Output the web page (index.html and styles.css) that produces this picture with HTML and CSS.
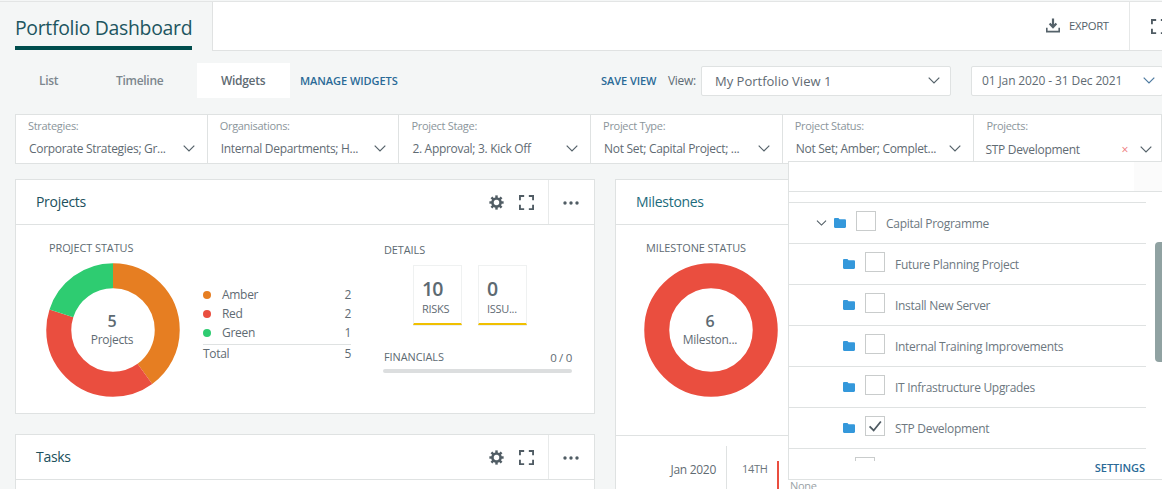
FILE: index.html
```html
<!DOCTYPE html>
<html lang="en">
<head>
<meta charset="utf-8">
<title>Portfolio Dashboard</title>
<link rel="stylesheet" href="styles.css">
</head>
<body>
<svg class="defs" aria-hidden="true">
  <symbol id="chev" viewBox="0 0 12 7"><polyline points="0.7,0.7 6,6 11.3,0.7" fill="none" stroke="currentColor" stroke-width="1.2"/></symbol>
  <symbol id="gear" viewBox="0 0 16 16">
    <circle cx="8" cy="8" r="4.4" fill="none" stroke="currentColor" stroke-width="2.6"/>
    <g stroke="currentColor" stroke-width="2.6">
      <line x1="8" y1="0.4" x2="8" y2="15.6"/>
      <line x1="0.4" y1="8" x2="15.6" y2="8"/>
      <line x1="2.6" y1="2.6" x2="13.4" y2="13.4"/>
      <line x1="13.4" y1="2.6" x2="2.6" y2="13.4"/>
    </g>
    <circle cx="8" cy="8" r="2.9" fill="#fff"/>
  </symbol>
  <symbol id="expand" viewBox="0 0 16 16"><path d="M1 5.5V1H5.5M10.5 1H15V5.5M15 10.5V15H10.5M5.5 15H1V10.5" fill="none" stroke="currentColor" stroke-width="2"/></symbol>
  <symbol id="dots" viewBox="0 0 16 4"><circle cx="2" cy="2" r="1.7" fill="currentColor"/><circle cx="8" cy="2" r="1.7" fill="currentColor"/><circle cx="14" cy="2" r="1.7" fill="currentColor"/></symbol>
  <symbol id="folder" viewBox="0 0 12 10"><path d="M0 1.2C0 .5.5 0 1.2 0H4.4L5.6 1.3H10.8C11.5 1.3 12 1.8 12 2.5V8.8C12 9.5 11.5 10 10.8 10H1.2C.5 10 0 9.5 0 8.8Z" fill="currentColor"/></symbol>
</svg>

<div class="app">
  <header class="topbar">
    <div class="title-tab"><h1 class="title">Portfolio Dashboard</h1></div>
    <div class="top-white">
      <button class="export">
        <svg class="export-icon" viewBox="0 0 14 14"><path d="M7 0V8M3.6 5L7 8.6L10.4 5" fill="none" stroke="currentColor" stroke-width="2.2"/><path d="M.8 9.3V13.1H13.2V9.3" fill="none" stroke="currentColor" stroke-width="1.6"/></svg>
        <span>EXPORT</span>
      </button>
      <div class="full-btn"><svg class="ico-expand"><use href="#expand"/></svg></div>
    </div>
  </header>

  <nav class="tabs-row">
    <div class="tab tab-list">List</div>
    <div class="tab tab-timeline">Timeline</div>
    <div class="tab tab-active">Widgets</div>
    <a class="link manage">MANAGE WIDGETS</a>
    <a class="link save">SAVE VIEW</a>
    <span class="view-label">View:</span>
    <div class="select view-select"><span>My Portfolio View 1</span><svg class="chev"><use href="#chev"/></svg></div>
    <div class="select date-select"><span>01 Jan 2020 - 31 Dec 2021</span><svg class="chev chev-blue"><use href="#chev"/></svg></div>
  </nav>

  <section class="filters">
    <div class="filter"><label>Strategies:</label><div class="filter-val"><span>Corporate Strategies; Gr...</span><svg class="chev"><use href="#chev"/></svg></div></div>
    <div class="filter"><label>Organisations:</label><div class="filter-val"><span>Internal Departments; H...</span><svg class="chev"><use href="#chev"/></svg></div></div>
    <div class="filter"><label>Project Stage:</label><div class="filter-val"><span>2. Approval; 3. Kick Off</span><svg class="chev"><use href="#chev"/></svg></div></div>
    <div class="filter"><label>Project Type:</label><div class="filter-val"><span>Not Set; Capital Project; ...</span><svg class="chev"><use href="#chev"/></svg></div></div>
    <div class="filter"><label>Project Status:</label><div class="filter-val"><span>Not Set; Amber; Complet...</span><svg class="chev"><use href="#chev"/></svg></div></div>
    <div class="filter filter-last"><label>Projects:</label><div class="filter-val val-low"><span>STP Development</span><i class="clear">×</i><svg class="chev"><use href="#chev"/></svg></div></div>
  </section>

  <main class="board">
    <div class="col-left">
      <article class="card card-projects">
        <div class="card-head">
          <h2>Projects</h2>
          <div class="tools">
            <svg class="ico-gear"><use href="#gear"/></svg>
            <svg class="ico-expand"><use href="#expand"/></svg>
          </div>
          <div class="more"><svg class="ico-dots"><use href="#dots"/></svg></div>
        </div>
        <div class="projects-body">
          <div class="status">
            <h3 class="sec">PROJECT STATUS</h3>
            <div class="donut">
              <svg viewBox="0 0 134 134">
                <g fill="none" stroke-width="25" transform="rotate(-90 67 67)">
                  <circle cx="67" cy="67" r="54.25" pathLength="100" stroke="#e67e22" stroke-dasharray="40 60"/>
                  <circle cx="67" cy="67" r="54.25" pathLength="100" stroke="#ea4e3f" stroke-dasharray="40 60" stroke-dashoffset="-40"/>
                  <circle cx="67" cy="67" r="54.25" pathLength="100" stroke="#2ecc71" stroke-dasharray="20 80" stroke-dashoffset="-80"/>
                </g>
              </svg>
              <div class="donut-text"><b>5</b><span>Projects</span></div>
            </div>
          </div>
          <div class="legend">
            <div class="lg-row"><i class="dot amber"></i><span>Amber</span><em>2</em></div>
            <div class="lg-row"><i class="dot red"></i><span>Red</span><em>2</em></div>
            <div class="lg-row"><i class="dot green"></i><span>Green</span><em>1</em></div>
            <div class="lg-total"><span>Total</span><em>5</em></div>
          </div>
          <div class="details">
            <h3 class="sec">DETAILS</h3>
            <div class="tiles">
              <div class="tile"><b>10</b><span>RISKS</span></div>
              <div class="tile"><b>0</b><span>ISSU...</span></div>
            </div>
            <div class="fin-head"><h3 class="sec">FINANCIALS</h3><span>0 / 0</span></div>
            <div class="fin-bar"></div>
          </div>
        </div>
      </article>
      <article class="card card-tasks">
        <div class="card-head">
          <h2>Tasks</h2>
          <div class="tools">
            <svg class="ico-gear"><use href="#gear"/></svg>
            <svg class="ico-expand"><use href="#expand"/></svg>
          </div>
          <div class="more"><svg class="ico-dots"><use href="#dots"/></svg></div>
        </div>
      </article>
    </div>
    <article class="card card-miles">
      <div class="card-head"><h2 class="miles-title">Milestones</h2></div>
      <div class="miles-body">
        <h3 class="sec">MILESTONE STATUS</h3>
        <div class="donut">
          <svg viewBox="0 0 134 134"><circle cx="67" cy="67" r="54.25" fill="none" stroke="#ea4e3f" stroke-width="25"/></svg>
          <div class="donut-text"><b>6</b><span>Mileston...</span></div>
        </div>
      </div>
      <div class="timeline">
        <div class="tl-month">Jan 2020</div>
        <div class="tl-day"><span>14TH</span><i class="tl-bar"></i></div>
      </div>
    </article>
  </main>

  <div class="dropdown">
    <div class="dd-search"><div class="dd-search-end"></div></div>
    <div class="dd-list">
      <div class="dd-gap"></div>
      <div class="dd-row">
        <svg class="dd-chev"><use href="#chev"/></svg>
        <svg class="folder"><use href="#folder"/></svg>
        <i class="check"></i><span>Capital Programme</span>
      </div>
      <div class="dd-row child"><svg class="folder"><use href="#folder"/></svg><i class="check"></i><span>Future Planning Project</span></div>
      <div class="dd-row child"><svg class="folder"><use href="#folder"/></svg><i class="check"></i><span>Install New Server</span></div>
      <div class="dd-row child"><svg class="folder"><use href="#folder"/></svg><i class="check"></i><span>Internal Training Improvements</span></div>
      <div class="dd-row child"><svg class="folder"><use href="#folder"/></svg><i class="check"></i><span>IT Infrastructure Upgrades</span></div>
      <div class="dd-row child"><svg class="folder"><use href="#folder"/></svg><i class="check checked"><svg viewBox="0 0 20 20"><polyline points="4,10.5 8.5,15 16.5,5" fill="none" stroke="#4e5a62" stroke-width="2"/></svg></i><span>STP Development</span></div>
      <div class="dd-row partial"><i class="check"></i></div>
    </div>
    <div class="dd-scroll"></div>
    <a class="link settings">SETTINGS</a>
  </div>
  <div class="none-text">None</div>
</div>
</body>
</html>
```
FILE: styles.css
```css
* { box-sizing: border-box; }
html, body { margin: 0; padding: 0; }
body {
  width: 1162px; height: 489px; overflow: hidden;
  background: #f4f6f6;
  font-family: "Open Sans", "Noto Sans", sans-serif;
  font-size: 12px; color: #5f6b73;
  letter-spacing: -0.025em;
}
.defs { display: none; }
svg { display: block; }
h1, h2, h3 { margin: 0; font-weight: 400; }
i, em { font-style: normal; }

.app { position: relative; width: 1162px; height: 489px; overflow: hidden; }

/* top bar */
.topbar { display: flex; height: 50px; margin-top: 1px; border-top: 1px solid #e3e5e5; }
.title-tab { width: 213px; padding-left: 15px; border-right: 1px solid #e0e2e2; }
.title {
  width: 177px; height: 48px; padding-top: 12px;
  border-bottom: 4px solid #004d4d;
  font-size: 19.4px; line-height: 27px; color: #1d5560; white-space: nowrap;
}
.top-white { flex: 1; display: flex; justify-content: flex-end; background: #fff; border-bottom: 1px solid #e0e2e2; }
.export {
  display: flex; flex: none; align-items: center; gap: 9px; width: 85px; padding: 0 0 2px 1px;
  background: none; border: 0; border-right: 1px solid #e6e8e8;
  font: inherit; font-size: 11.3px; color: #55626a; letter-spacing: inherit;
}
.export-icon { width: 14px; height: 15px; color: #55626a; flex: none; }
.full-btn { flex: none; width: 32px; padding: 17px 0 0 21px; overflow: hidden; }
.ico-expand { width: 15px; height: 15px; flex: none; color: #505c64; }

/* tab row */
.tabs-row { display: flex; align-items: center; height: 35px; margin-top: 12px; }
.tabs-row > * { flex: none; }
.tab { height: 35px; padding-top: 1px; line-height: 34px; font-weight: 600; color: #7c878e; }
.tab-list { margin-left: 39px; width: 76px; }
.tab-timeline { width: 82px; padding-left: 1px; }
.tab-active { width: 93px; padding-left: 24px; background: #fff; color: #5f6b73; }
.link { font-weight: 600; font-size: 11px; color: #2a6a97; white-space: nowrap; letter-spacing: -0.005em; }
.manage { margin-left: 10px; width: 301px; }
.view-label { margin-left: 12px; width: 33px; color: #5f6b73; }
.select {
  display: flex; align-items: center; height: 30px; background: #fff;
  border: 1px solid #dfe2e2; border-radius: 2px; color: #5f6b73;
}
.save { width: 55px; }
.view-select { width: 250px; padding: 0 10px 0 13px; font-size: 13px; letter-spacing: 0; }
.view-select span { padding-top: 1px; }
.date-select { width: 192px; margin-left: 20px; padding: 0 7px 0 10px; letter-spacing: -0.01em; }
.select span { flex: 1; white-space: nowrap; }
.chev { width: 12px; height: 7px; flex: none; color: #55626a; }
.chev-blue { color: #4d7aa0; }

/* filters */
.filters { display: flex; height: 50px; margin: 16px 0 0 15px; background: #fff; border: 1px solid #dfe2e2; }
.filter { flex: 0 0 191.7px; padding: 4px 12px 0 13px; border-right: 1px solid #dfe2e2; }
.filter label { display: block; margin-left: -1px; font-size: 11px; line-height: 14px; color: #8b959b; }
.filter-val { display: flex; align-items: center; margin-top: 6px; height: 18px; color: #5f6b73; white-space: nowrap; }
.filter-val span { flex: 1; }
.val-low { margin: 7px 0 0 -2px; }
.filter-last { border-right: 0; flex: 1; padding-right: 9px; }
.clear { color: #e77; font-size: 12px; margin-right: 12px; }

/* board */
.board { display: grid; grid-template-columns: 580px 1fr; column-gap: 20px; margin: 15px 0 0 15px; }
.col-left { display: flex; flex-direction: column; gap: 20px; }
.card { background: #fff; border: 1px solid #dfe2e2; }
.card-head { display: flex; align-items: center; height: 45px; padding-left: 20px; border-bottom: 1px solid #dfe2e2; }
.card-head h2 { flex: 1; padding-bottom: 2px; font-size: 14px; color: #20505c; }
.card-head .miles-title { color: #1c6b7c; }
.tools { display: flex; align-items: center; gap: 15px; }
.ico-gear { width: 15px; height: 15px; color: #505c64; }
.more { display: flex; align-items: center; justify-content: center; width: 46px; height: 100%; margin-left: 14px; padding-right: 2px; border-left: 1px solid #e8eaea; }
.ico-dots { width: 16px; height: 4px; color: #505c64; margin-top: 2px; }

.card-projects { height: 235px; }
.projects-body { display: flex; height: 188px; }
.status { width: 187px; padding: 16px 0 0 33px; }
.sec { font-size: 10.9px; font-weight: 500; line-height: 14px; color: #5d6a72; letter-spacing: -0.005em; white-space: nowrap; }
.donut { position: relative; width: 134px; height: 134px; margin: 8px 0 0 -3px; }
.donut-text { position: absolute; inset: 0; display: flex; flex-direction: column; align-items: center; justify-content: center; padding: 0 2px 0 0; }
.donut-text b { font-size: 16px; line-height: 19px; font-weight: 600; color: #5d6a72; }
.donut-text span { font-size: 12px; line-height: 17px; }

.legend { width: 148px; padding-top: 60px; }
.lg-row { display: flex; align-items: center; height: 19px; }
.lg-row span { flex: 1; margin-left: 11px; }
.dot { width: 8px; height: 8px; border-radius: 50%; margin-left: 0; }
.amber { background: #e67e22; }
.red { background: #ea4e3f; }
.green { background: #2ecc71; }
.lg-total { display: flex; justify-content: space-between; height: 20px; margin-top: 2px; border-top: 1px solid #dfe2e2; line-height: 18px; }

.details { width: 189px; margin-left: 32px; padding-top: 18px; }
.details > .sec, .fin-head { padding-left: 1px; }
.tiles { display: flex; gap: 16px; margin: 8px 0 0 30px; }
.tile { display: flex; flex-direction: column; width: 49px; height: 60px; padding: 10px 0 0 8px; border: 1px solid #eff1f1; border-bottom: 2px solid #f0c000; box-shadow: 0 1px 0 #eef0f0; }
.tile b { font-size: 19.5px; line-height: 26px; font-weight: 600; color: #5d6a72; letter-spacing: -0.05em; }
.tile span { font-size: 11px; line-height: 16px; margin-top: -1px; white-space: nowrap; }
.fin-head { display: flex; justify-content: space-between; align-items: center; height: 14px; margin-top: 25px; }
.fin-head span { font-size: 11.5px; }
.fin-bar { height: 4px; margin-top: 5px; background: #dcdedf; border-radius: 2px; }

.card-tasks { height: 60px; }
.card-miles { position: relative; height: 320px; margin-right: -5px; }
.miles-body { height: 211px; padding: 16px 0 0 30px; border-bottom: 1px solid #dfe2e2; }
.miles-body .donut { margin-left: -2px; }
.timeline { display: flex; height: 60px; padding-top: 10px; }
.tl-month { width: 111px; padding: 15px 10px 0 0; text-align: right; color: #5f6b73; border-right: 1px solid #dfe2e2; }
.tl-day { flex: 1; display: flex; padding: 15px 0 0 15px; color: #6b767d; font-size: 11px; }
.tl-bar { width: 2px; height: 40px; margin-left: 9px; background: #ea4e3f; }

/* dropdown overlay */
.dropdown { position: absolute; left: 788px; top: 161px; width: 375px; height: 319px; background: #fff; border: 1px solid #dfe2e2; z-index: 2; }
.dd-search { position: relative; height: 30px; border-bottom: 1px solid #dfe2e2; }
.dd-search-end { position: absolute; right: 0; top: 0; bottom: 0; width: 28px; background: #fbfbfb; }
.dd-list { width: 357px; }
.dd-gap { height: 11px; border-bottom: 1px solid #dfe2e2; }
.dd-row { display: flex; align-items: center; height: 41px; padding-left: 27px; border-bottom: 1px solid #dfe2e2; color: #6d787f; font-size: 12px; }
.dd-row span { margin-top: 1px; }
.dd-row.child { padding-left: 54px; }
.dd-chev { width: 11px; height: 6px; margin-right: 7px; color: #4e5a62; }
.folder { width: 12px; height: 10px; flex: none; color: #3498db; margin-right: 10px; }
.check { display: block; flex: none; width: 20px; height: 20px; margin: -4px 10px 0 0; border: 1px solid #c9cccc; }
.check svg { width: 18px; height: 18px; }
.dd-row.partial { height: 30px; border: 0; align-items: flex-start; padding: 8px 0 0 66px; }
.partial .check { height: 4px; margin-top: 0; border-bottom: 0; }
.dd-scroll { position: absolute; right: 0; top: 80px; width: 7px; height: 120px; background: #90a2a2; border-radius: 4px 0 0 4px; }
.settings { position: absolute; right: 17px; top: 298px; }
.none-text { position: absolute; left: 790px; top: 478px; font-size: 11px; color: #9aa2a6; z-index: 1; }
```
